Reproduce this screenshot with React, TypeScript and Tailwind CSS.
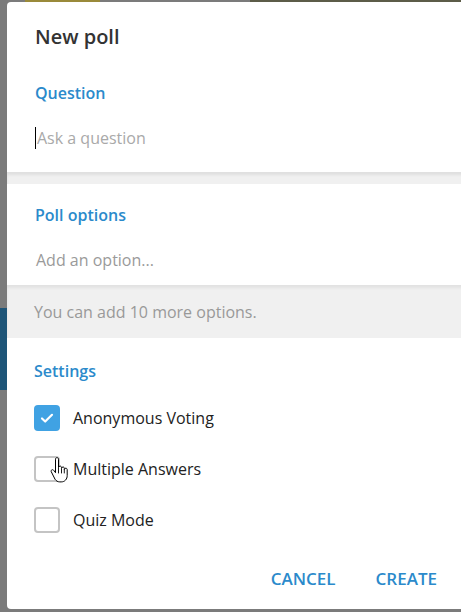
import React from 'react';

function Checkbox({ checked }: { checked?: boolean }) {
  if (checked) {
    return (
      <span className="flex h-[26px] w-[26px] shrink-0 items-center justify-center rounded-[4px] bg-[#40a2e3]">
        <svg width="16" height="16" viewBox="0 0 16 16" fill="none">
          <path d="M3 8.5l3.2 3L13 4.8" stroke="white" strokeWidth="2.2" strokeLinecap="round" strokeLinejoin="round" />
        </svg>
      </span>
    );
  }
  return <span className="h-[26px] w-[26px] shrink-0 rounded-[4px] border-2 border-[#c4c4c4] bg-white" />;
}

function HandCursor() {
  return (
    <svg className="absolute left-[50px] top-[457px]" width="19" height="26" viewBox="0 0 19 26" fill="none">
      <path
        d="M5.5 2.2c0-1 .7-1.6 1.5-1.6s1.5.6 1.5 1.6v8.3c.2-.9.9-1.4 1.6-1.4.8 0 1.4.6 1.4 1.5v.6c.2-.8.8-1.2 1.5-1.2.8 0 1.4.6 1.4 1.5v.8c.2-.7.8-1.1 1.4-1.1.8 0 1.4.6 1.4 1.5v5.8c0 3.6-2.3 6.4-6 6.4H9.8c-2.2 0-3.6-1-4.8-2.7L1.4 15c-.5-.8-.3-1.7.4-2.1.7-.4 1.5-.2 2 .5l1.7 2.3V2.2z"
        fill="white"
        stroke="black"
        strokeWidth="1"
        strokeLinejoin="round"
      />
      <path d="M8.5 11v5M11.5 11.6v4.4M14.3 12.4v3.6" stroke="black" strokeWidth="0.9" strokeLinecap="round" />
    </svg>
  );
}

export default function App() {
  return (
    <div
      className="relative h-[612px] w-[461px] overflow-hidden bg-[#7b7b7b]"
      style={{ fontFamily: '"Open Sans", "Liberation Sans", sans-serif' }}
    >
      <div className="absolute left-0 top-[308px] h-[82px] w-[7px] bg-[#1e5578]" />
      <div className="absolute left-[250px] top-0 h-[2px] w-[211px] bg-[#5c5c48]" />
      <div className="absolute left-[25px] top-0 h-[2px] w-[75px] bg-[#9a8a3a]" />

      <div className="absolute left-[7px] top-[2px] flex h-[607px] w-[470px] flex-col rounded-[4px] bg-white">
        <div className="px-[28px] pt-[23px]">
          <h1 className="text-[20px] font-semibold leading-[24px] text-[#333]">New poll</h1>
          <div className="mt-[34px] text-[16px] font-semibold leading-[20px] text-[#2b8acb]">Question</div>
          <div className="mt-[25px] flex h-[20px] items-center text-[16px] leading-[20px] text-[#a9a9a9]">
            <span className="mr-px inline-block h-[22px] w-px bg-black" />
            Ask a question
          </div>
        </div>

        <div className="mt-[24px] h-[12px] bg-[#f0f0f0] shadow-[inset_0_3px_3px_rgba(0,0,0,0.07)]" />

        <div className="px-[28px] pt-[21px]">
          <div className="text-[16px] font-semibold leading-[20px] text-[#2b8acb]">Poll options</div>
          <div className="mt-[25px] pl-[1px] text-[16px] leading-[20px] text-[#9a9a9a]">Add an option...</div>
        </div>

        <div className="mt-[15px] flex h-[53px] items-center bg-[#f0f0f0] px-[27px] text-[16px] text-[#999] shadow-[inset_0_3px_3px_rgba(0,0,0,0.06)]">
          You can add 10 more options.
        </div>

        <div className="px-[27px] pt-[23px]">
          <div className="text-[16px] font-semibold leading-[20px] text-[#2b8acb]">Settings</div>
          <div className="mt-[24px] flex flex-col gap-[25px]">
            <div className="flex items-center gap-[13px] text-[16px] text-[#222]">
              <Checkbox checked />
              <span>Anonymous Voting</span>
            </div>
            <div className="flex items-center gap-[13px] text-[16px] text-[#222]">
              <Checkbox />
              <span>Multiple Answers</span>
            </div>
            <div className="flex items-center gap-[13px] text-[16px] text-[#222]">
              <Checkbox />
              <span>Quiz Mode</span>
            </div>
          </div>
        </div>

        <div className="mt-[33px] flex w-[454px] justify-end gap-[40px] pr-[24px] text-[17px] font-semibold text-[#2b8acb]">
          <span>CANCEL</span>
          <span>CREATE</span>
        </div>
      </div>

      <HandCursor />
    </div>
  );
}
